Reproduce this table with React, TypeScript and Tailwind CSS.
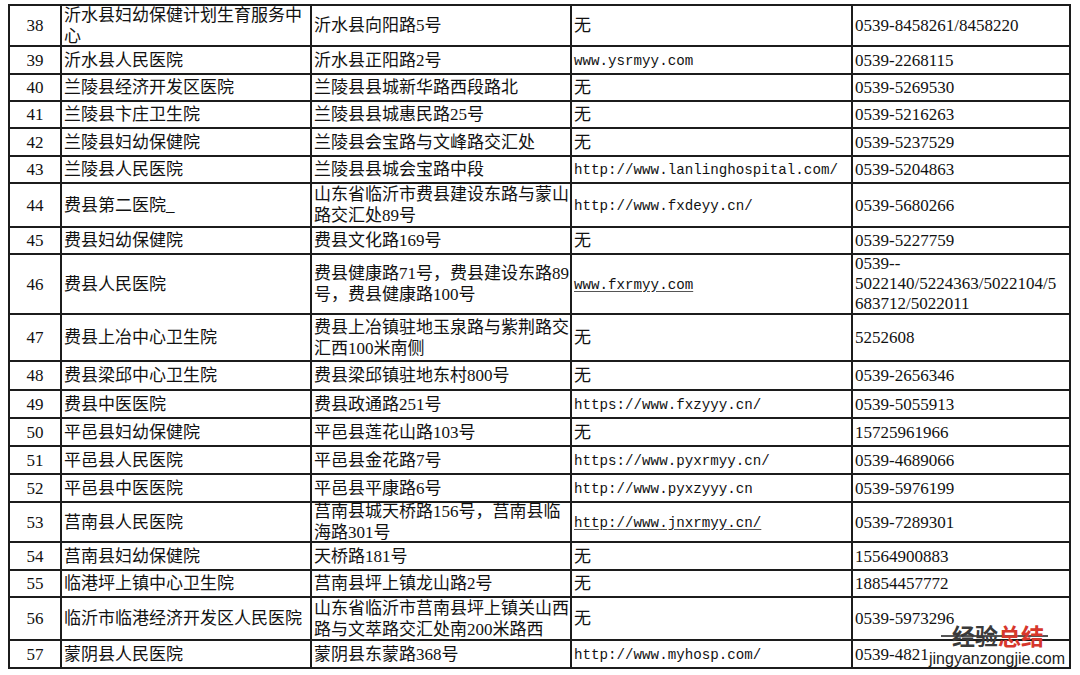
import React from 'react';

/**
 * One row of the hospital listing
 */
interface Row {
  no: number;
  name: string[];
  addr: string[];
  web: string;
  link?: boolean;
  phone: string[];
  h: string;
}

const rows: Row[] = [
  { no: 38, name: ['沂水县妇幼保健计划生育服务中', '心'], addr: ['沂水县向阳路5号'], web: '无', phone: ['0539-8458261/8458220'], h: 'h-[41px]' },
  { no: 39, name: ['沂水县人民医院'], addr: ['沂水县正阳路2号'], web: 'www.ysrmyy.com', phone: ['0539-2268115'], h: 'h-[28px]' },
  { no: 40, name: ['兰陵县经济开发区医院'], addr: ['兰陵县县城新华路西段路北'], web: '无', phone: ['0539-5269530'], h: 'h-[27px]' },
  { no: 41, name: ['兰陵县卞庄卫生院'], addr: ['兰陵县县城惠民路25号'], web: '无', phone: ['0539-5216263'], h: 'h-[27px]' },
  { no: 42, name: ['兰陵县妇幼保健院'], addr: ['兰陵县会宝路与文峰路交汇处'], web: '无', phone: ['0539-5237529'], h: 'h-[28px]' },
  { no: 43, name: ['兰陵县人民医院'], addr: ['兰陵县县城会宝路中段'], web: 'http://www.lanlinghospital.com/', phone: ['0539-5204863'], h: 'h-[27px]' },
  { no: 44, name: ['费县第二医院_'], addr: ['山东省临沂市费县建设东路与蒙山', '路交汇处89号'], web: 'http://www.fxdeyy.cn/', phone: ['0539-5680266'], h: 'h-[44px]' },
  { no: 45, name: ['费县妇幼保健院'], addr: ['费县文化路169号'], web: '无', phone: ['0539-5227759'], h: 'h-[27px]' },
  { no: 46, name: ['费县人民医院'], addr: ['费县健康路71号，费县建设东路89', '号，费县健康路100号'], web: 'www.fxrmyy.com', link: true, phone: ['0539--', '5022140/5224363/5022104/5', '683712/5022011'], h: 'h-[60px]' },
  { no: 47, name: ['费县上冶中心卫生院'], addr: ['费县上冶镇驻地玉泉路与紫荆路交', '汇西100米南侧'], web: '无', phone: ['5252608'], h: 'h-[47px]' },
  { no: 48, name: ['费县梁邱中心卫生院'], addr: ['费县梁邱镇驻地东村800号'], web: '无', phone: ['0539-2656346'], h: 'h-[29px]' },
  { no: 49, name: ['费县中医医院'], addr: ['费县政通路251号'], web: 'https://www.fxzyyy.cn/', phone: ['0539-5055913'], h: 'h-[28px]' },
  { no: 50, name: ['平邑县妇幼保健院'], addr: ['平邑县莲花山路103号'], web: '无', phone: ['15725961966'], h: 'h-[28px]' },
  { no: 51, name: ['平邑县人民医院'], addr: ['平邑县金花路7号'], web: 'https://www.pyxrmyy.cn/', phone: ['0539-4689066'], h: 'h-[28px]' },
  { no: 52, name: ['平邑县中医医院'], addr: ['平邑县平康路6号'], web: 'http://www.pyxzyyy.cn', phone: ['0539-5976199'], h: 'h-[28px]' },
  { no: 53, name: ['莒南县人民医院'], addr: ['莒南县城天桥路156号，莒南县临', '海路301号'], web: 'http://www.jnxrmyy.cn/', link: true, phone: ['0539-7289301'], h: 'h-[40px]' },
  { no: 54, name: ['莒南县妇幼保健院'], addr: ['天桥路181号'], web: '无', phone: ['15564900883'], h: 'h-[28px]' },
  { no: 55, name: ['临港坪上镇中心卫生院'], addr: ['莒南县坪上镇龙山路2号'], web: '无', phone: ['18854457772'], h: 'h-[27px]' },
  { no: 56, name: ['临沂市临港经济开发区人民医院'], addr: ['山东省临沂市莒南县坪上镇关山西', '路与文萃路交汇处南200米路西'], web: '无', phone: ['0539-5973296'], h: 'h-[43px]' },
  { no: 57, name: ['蒙阴县人民医院'], addr: ['蒙阴县东蒙路368号'], web: 'http://www.myhosp.com/', phone: ['0539-4821'], h: 'h-[28px]' },
];

const cell = 'border-2 border-[#1c1c1c] px-[2px] py-0 align-middle text-left whitespace-nowrap';

/** Text with explicit line breaks; multi-line blocks are pulled in so rows stay tight */
function Lines({ items, tight }: { items: string[]; tight?: boolean }) {
  if (items.length === 1) return <>{items[0]}</>;
  return (
    <div className={tight ? '-my-[3px] leading-[20px]' : '-my-[3px]'}>
      {items.map((t, i) => (
        <React.Fragment key={i}>
          {i > 0 && <br />}
          {t}
        </React.Fragment>
      ))}
    </div>
  );
}

export default function App() {
  return (
    <div className="relative w-[1080px] h-[675px] overflow-hidden bg-white pt-[4px] pl-[8px] text-[#111] font-['Liberation_Serif','Noto_Sans_CJK_SC',serif] text-[17px] leading-[21px]">
      <table className="table-fixed border-collapse w-[1063px]">
        <colgroup>
          <col className="w-[52px]" />
          <col className="w-[250px]" />
          <col className="w-[260px]" />
          <col className="w-[281px]" />
          <col className="w-[218px]" />
        </colgroup>
        <tbody>
          {rows.map(r => (
            <tr key={r.no} className={r.h}>
              <td className="border-2 border-[#1c1c1c] p-0 align-middle text-center">{r.no}</td>
              <td className={cell}><Lines items={r.name} /></td>
              <td className={cell}><Lines items={r.addr} /></td>
              <td className={cell}>
                {r.web === '无' ? (
                  '无'
                ) : (
                  <span
                    className={`font-['Liberation_Mono',monospace] text-[14.2px] ${
                      r.link ? 'underline underline-offset-2 decoration-[#555]' : ''
                    }`}
                  >
                    {r.web}
                  </span>
                )}
              </td>
              <td className={cell}><Lines items={r.phone} tight /></td>
            </tr>
          ))}
        </tbody>
      </table>

      {/* site watermark, bottom right */}
      <div className="absolute left-[952px] top-[621px] flex items-center">
        <div className="absolute left-[-11px] right-[-4px] top-[14px] h-[2px] bg-[#555]" />
        <span className="relative font-['Noto_Sans_CJK_SC',sans-serif] text-[23px] leading-[28px] font-bold text-[#3a3a3a]">经验</span>
        <span className="relative font-['Noto_Sans_CJK_SC',sans-serif] text-[23px] leading-[28px] font-bold text-[#d7372c]">总结</span>
      </div>
      <div className="absolute left-[929px] top-[649px] font-['Liberation_Sans',sans-serif] text-[16px] leading-[19px] text-[#222]">
        jingyanzongjie.com
      </div>
    </div>
  );
}
